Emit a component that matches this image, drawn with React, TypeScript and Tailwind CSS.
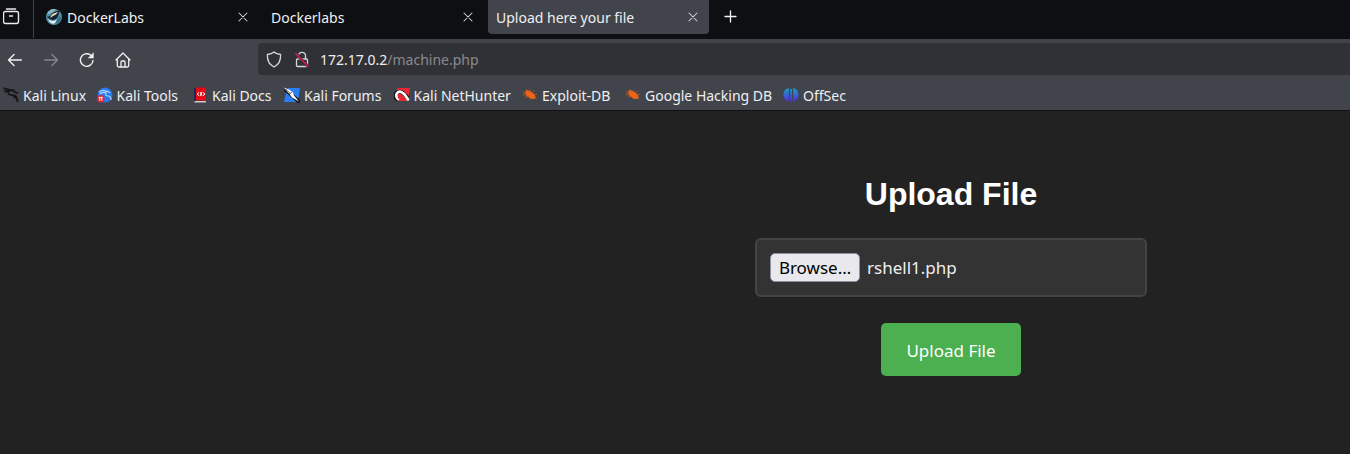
import type { ReactNode } from "react";

function CloseIcon() {
  return (
    <svg width="10" height="10" viewBox="0 0 10 10" fill="none" stroke="#d8d8dc" strokeWidth="1.05" strokeLinecap="round">
      <path d="M1 1l8 8M9 1L1 9" />
    </svg>
  );
}

function DockerLabsIcon() {
  return (
    <svg width="16" height="16" viewBox="0 0 16 16">
      <circle cx="8" cy="8" r="8" fill="#4f91a8" />
      <path d="M1 5a8 8 0 0 1 9-5L7 3 3 5z" fill="#8eb9c4" />
      <path d="M1 8c1-1 3 0 4-2s3-3 6-4l3-1-1 3c-1 4-2 6-5 7-3 0-5-1-7-3z" fill="#18242f" />
      <path d="M5 7c2-3 4-3 7-4-1 2-3 3-5 4l-3 2z" fill="#f2dfc0" />
      <path d="M2 10c2 2 6 3 9 0l-2 4c-3 2-6-1-7-4z" fill="#e8eee9" />
      <path d="M11 11l3-4 1 3-2 4-4 1z" fill="#3b6f88" />
    </svg>
  );
}

function Dragon({ color = "#111315" }: { color?: string }) {
  return (
    <g fill="none" stroke={color} strokeLinecap="round" strokeLinejoin="round">
      <path d="M.5 1l4 .8L8 3.2l3-.4M1 3l5 .6M2 5.2l4-1.1" strokeWidth="1.2" />
      <path d="M6 3.5c-2 3 0 4.5 3 4.6 3 0 4.5 1.2 4.8 3.1l.8 3.3M8 3.3c2 0 3.5.6 4.5 2.2l2 .3M10.3 8.5l1.8 2.3" strokeWidth="1.7" />
    </g>
  );
}

function KaliLinuxIcon() {
  return (
    <svg width="16" height="16" viewBox="0 0 16 16">
      <Dragon />
    </svg>
  );
}

function KaliToolsIcon() {
  return (
    <svg width="16" height="16" viewBox="0 0 16 16">
      <circle cx="8" cy="8" r="7.5" fill="#2878ef" />
      <path d="M2 5c3-2 6-2 8 0M3 7c2-2 5-2 6-1-1 2 0 3 2 3 2 0 3 2 3 4M9 4c2 0 3 1 4 2" fill="none" stroke="#b5d7ff" strokeWidth="1.2" />
      <circle cx="3.8" cy="11.8" r="3.8" fill="#e32635" />
      <path d="M1.8 10.4h4M2.8 10.4v3.4M4.8 10.4v3.4" stroke="#fff" strokeWidth=".9" />
    </svg>
  );
}

function KaliDocsIcon() {
  return (
    <svg width="16" height="16" viewBox="0 0 16 16">
      <path d="M2 1h2v14H2z" fill="#172a58" />
      <path d="M4 .5h10v13H4z" fill="#e50914" />
      <path d="M2.5 14H14v1.5H2.5z" fill="#d4c9c9" />
      <path d="M7 5.5L5 7l2 1.7M11 5.5L13 7l-2 1.7M10 4.8L8 9.2M8.2 5.2l2 3.5" fill="none" stroke="#fff" strokeWidth="1" />
    </svg>
  );
}

function KaliForumsIcon() {
  return (
    <svg width="16" height="16" viewBox="0 0 16 16">
      <path d="M3 1h13l-2 14H0z" fill="#287ff5" />
      <path d="M1 2l12 11 3 2" stroke="#17191d" strokeWidth="4" />
      <path d="M0 .5l5 2 4 3 1 3 5 6-7-4-3-4z" fill="#fff" />
      <path d="M2 2l5 5M8 5L5 7" stroke="#333" strokeWidth=".6" />
    </svg>
  );
}

function NetHunterIcon() {
  return (
    <svg width="16" height="16" viewBox="0 0 16 16">
      <path d="M3 1h13l-2 13H1z" fill="#e92932" />
      <path d="M4 13C-2 9 3 2 9 6l5 5" fill="none" stroke="#15171b" strokeWidth="4" />
      <path d="M4 12C0 8 4 3 8 5.5c3 1 4 4 6 7" fill="none" stroke="#fff" strokeWidth="2.6" strokeLinecap="round" />
      <path d="M5.3 11.5C3.6 9 6 7.5 8 9l2 2" fill="none" stroke="#e92932" strokeWidth="1.8" />
    </svg>
  );
}

function BugIcon() {
  return (
    <svg width="16" height="16" viewBox="0 0 16 16">
      <path d="M3.5 3.5c2-.7 4 0 5.5 1.3l3.2 2.4c1.4 1.4 1.7 3.5.8 4.5-2 .8-4.4.1-6-1.1L3.7 8z" fill="#ef6517" />
      <path d="M1 5l3 1M.8 8l4-.5M3 10.3l4-1.2M7 4.8L9 3M10 6l2.5-2M12 8l3-.7M11 10l3.5 1.4M5 2.5L6 5M8 11l1 1.5" stroke="#ce5a1c" strokeWidth=".8" />
    </svg>
  );
}

function OffSecIcon() {
  return (
    <svg width="16" height="16" viewBox="0 0 16 16">
      <defs>
        <linearGradient id="offsec" x2="0" y2="1">
          <stop stopColor="#16a5c5" />
          <stop offset="1" stopColor="#5924df" />
        </linearGradient>
      </defs>
      <path d="M5.8 1C2 2 .5 4.6.5 8s1.8 5.5 5.3 6.5zM7.1 2h1.8v13H7.1zM10.2 1c3.8 1 5.3 3.6 5.3 7s-1.8 5.5-5.3 6.5z" fill="url(#offsec)" />
    </svg>
  );
}

function Tab({ title, spacing, active = false, icon }: { title: string; spacing: string; active?: boolean; icon?: ReactNode }) {
  return (
    <div className={`flex h-[34px] w-[221px] shrink-0 items-center rounded-b-[4px] pr-[11px] pl-2 ${active ? "bg-[#42444c]" : ""}`}>
      {icon && <span className="mr-[5px]">{icon}</span>}
      <span className={`grow whitespace-nowrap ${spacing}`}>{title}</span>
      <CloseIcon />
    </div>
  );
}

const bookmarks = [
  { name: "Kali Linux", icon: <KaliLinuxIcon />, width: "w-[93.5px]", spacing: "" },
  { name: "Kali Tools", icon: <KaliToolsIcon />, width: "w-[95.5px]", spacing: "" },
  { name: "Kali Docs", icon: <KaliDocsIcon />, width: "w-[92px]", spacing: "" },
  { name: "Kali Forums", icon: <KaliForumsIcon />, width: "w-[109.5px]", spacing: "" },
  { name: "Kali NetHunter", icon: <NetHunterIcon />, width: "w-[128.5px]", spacing: "" },
  { name: "Exploit-DB", icon: <BugIcon />, width: "w-[103px]", spacing: "" },
  { name: "Google Hacking DB", icon: <BugIcon />, width: "w-[158px]", spacing: "" },
  { name: "OffSec", icon: <OffSecIcon />, width: "w-[80px]", spacing: "" },
];

export default function App() {
  return (
    <div className="flex h-[454px] w-[1350px] flex-col overflow-hidden bg-[#222222] font-['Noto_Sans',sans-serif] text-[14px] text-[#efeff1]">
      <header className="flex h-[39px] shrink-0 items-start bg-[#0e0f13]">
        <div className="flex h-[38px] w-[34px] shrink-0 border-r border-[#414248] pt-2 pl-[3px]">
          <svg width="17" height="17" viewBox="0 0 17 17" fill="none" stroke="#ececf0" strokeWidth="1.4" strokeLinecap="round">
            <path d="M3.5 1h9M2.5 3.5h11a2 2 0 0 1 2 2v8a2 2 0 0 1-2 2h-11a2 2 0 0 1-2-2v-8a2 2 0 0 1 2-2zM6.5 8h3" />
          </svg>
        </div>
        <div className="flex gap-1 pl-1">
          <Tab title="DockerLabs" spacing="" icon={<DockerLabsIcon />} />
          <Tab title="Dockerlabs" spacing="" />
          <Tab title="Upload here your file" spacing="" active />
        </div>
        <svg className="mt-[10px] ml-[15px]" width="13" height="13" viewBox="0 0 13 13" stroke="#f3f3f5" strokeWidth="1.3" strokeLinecap="round">
          <path d="M6.5 1v11M1 6.5h11" />
        </svg>
      </header>

      <nav className="flex h-[41px] shrink-0 items-center bg-[#42444c]">
        <div className="flex w-[258px] items-center gap-5 pl-[7px]">
          <svg width="16" height="16" viewBox="0 0 16 16" fill="none" stroke="#f1f1f3" strokeWidth="1.4" strokeLinecap="round" strokeLinejoin="round">
            <path d="M14.3 8H1.5M7 2.5L1.5 8 7 13.5" />
          </svg>
          <svg width="16" height="16" viewBox="0 0 16 16" fill="none" stroke="#85868c" strokeWidth="1.4" strokeLinecap="round" strokeLinejoin="round">
            <path d="M1.7 8h12.8M9 2.5L14.5 8 9 13.5" />
          </svg>
          <svg width="16" height="16" viewBox="0 0 16 16" fill="none" stroke="#f1f1f3" strokeWidth="1.4" strokeLinecap="round" strokeLinejoin="round">
            <path d="M14 8.5A6.3 6.3 0 1 1 11.5 3L13 4.3" />
            <path d="M14.4 1v5H9.5z" fill="#f1f1f3" strokeWidth=".5" />
          </svg>
          <svg width="16" height="16" viewBox="0 0 16 16" fill="none" stroke="#f1f1f3" strokeWidth="1.3" strokeLinecap="round" strokeLinejoin="round">
            <path d="M1 8l7-7 7 7M2.3 7v6.5a1.5 1.5 0 0 0 1.5 1.5h8.4a1.5 1.5 0 0 0 1.5-1.5V7M6 15v-5a1 1 0 0 1 1-1h2a1 1 0 0 1 1 1v5" />
          </svg>
        </div>
        <div className="mt-[-1px] flex h-8 grow items-center rounded-l-[4px] bg-[#303136] pl-2">
          <svg width="16" height="17" viewBox="0 0 16 17" fill="none" stroke="#d7d7da" strokeWidth="1.3" strokeLinejoin="round">
            <path d="M8 1C6.5 2.4 4 3.3 1.4 3.5 1.1 9 3 13.6 8 16c5-2.4 6.9-7 6.6-12.5C12 3.3 9.5 2.4 8 1z" />
          </svg>
          <svg className="ml-3" width="16" height="17" viewBox="0 0 16 17" fill="none" stroke="#d7d7da" strokeWidth="1.3">
            <path d="M4.5 8V4.8a3.5 3.5 0 0 1 7 0V8M3.5 8h9a1 1 0 0 1 1 1v5.5a1 1 0 0 1-1 1h-9a1 1 0 0 1-1-1V9a1 1 0 0 1 1-1z" />
            <path d="M1.3 2L14.5 16" stroke="#303136" strokeWidth="3" />
            <path d="M1.3 2L14.5 16" stroke="#e2174d" strokeWidth="1.4" />
          </svg>
          <span className="ml-[10px] whitespace-nowrap">
            172.17.0.2<span className="text-[#898a8e]">/machine.php</span>
          </span>
        </div>
      </nav>

      <div className="flex h-[31px] shrink-0 items-center border-b border-[#101116] bg-[#42444c] pl-[3px]">
        {bookmarks.map((bookmark) => (
          <div key={bookmark.name} className={`flex shrink-0 items-center gap-1 ${bookmark.width}`}>
            <span className="shrink-0">{bookmark.icon}</span>
            <span className={`whitespace-nowrap ${bookmark.spacing}`}>{bookmark.name}</span>
          </div>
        ))}
      </div>

      <main className="flex grow flex-col items-center pt-[64px] pl-[552px]">
        <h1 className="font-['Liberation_Sans',sans-serif] text-[32px] leading-[38px] font-bold text-white">Upload File</h1>
        <div className="mt-[25px] flex h-[59px] w-[392px] items-center rounded-[6px] border-2 border-[#444444] bg-[#333333] pl-[13px] text-[17px]">
          <button className="h-[29px] w-[90px] shrink-0 rounded-[5px] border border-[#8f8f9d] bg-[#e9e9ed] leading-[27px] text-black">
            Browse…
          </button>
          <span className="ml-[7px] text-[#eeeeee]">rshell1.php</span>
        </div>
        <button className="mt-[26px] h-[53px] w-[140px] rounded-[5px] bg-[#4caf50] pt-[2px] text-[17px] text-white">Upload File</button>
      </main>
    </div>
  );
}
